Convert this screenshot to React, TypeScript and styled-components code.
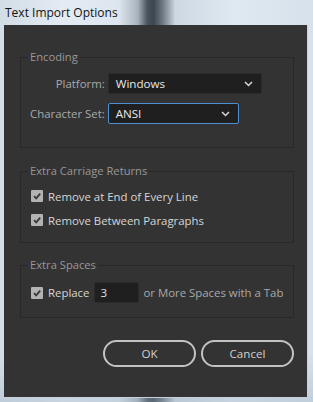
import React from "react";
import styled, { createGlobalStyle } from "styled-components";

const FONT = `"Open Sans", "Liberation Sans", sans-serif`;

const GlobalStyle = createGlobalStyle`
  html, body {
    margin: 0;
    padding: 0;
    width: 313px;
    height: 402px;
    overflow: hidden;
  }
  * { box-sizing: border-box; }
`;

const Frame = styled.div`
  width: 313px;
  height: 402px;
  display: flex;
  flex-direction: column;
  font-family: ${FONT};
  background:
    linear-gradient(180deg, rgba(255,255,255,0.0) 0%, rgba(255,255,255,0) 88%, rgba(150,170,190,0.35) 100%),
    linear-gradient(90deg, #d3dde6 0%, #e3ebf3 20%, #dde6ef 38%, #a9b3bc 44%, #4a5560 47%, #3b4650 49%, #6f7a84 52%, #cdd8e3 56%, #e0e9f1 75%, #d6e1eb 100%);
`;

const TitleBar = styled.div`
  height: 25px;
  flex: none;
  display: flex;
  align-items: center;
  padding-left: 5px;
  padding-bottom: 1px;
  font-size: 12px;
  color: #141414;
`;

const Client = styled.div`
  margin-left: 4px;
  width: 304px;
  height: 373px;
  flex: none;
  background: #333333;
  border-right: 1px solid #c6d1db;
  border-bottom: 1px solid #c6d1db;
  padding: 25px 13px 0 16px;
  display: flex;
  flex-direction: column;
`;

const Group = styled.fieldset<{ $mt: number; $pt: number; $pb: number }>`
  margin: ${(p) => p.$mt}px 0 0 0;
  border: 1px solid #282828;
  padding: ${(p) => p.$pt}px 8px ${(p) => p.$pb}px 9px;
  min-width: 0;
`;

const Legend = styled.legend`
  font-size: 11.2px;
  line-height: 14px;
  color: #989898;
  padding: 0 2px;
  margin-left: -2px;
`;

const FormGrid = styled.div`
  display: grid;
  grid-template-columns: max-content max-content;
  column-gap: 3px;
  row-gap: 9px;
  align-items: center;
`;

const FieldLabel = styled.span`
  justify-self: end;
  font-size: 11.4px;
  color: #aaaaaa;
`;

const Select = styled.div<{ $w: number; $focused?: boolean }>`
  width: ${(p) => p.$w}px;
  height: 21px;
  display: flex;
  align-items: center;
  justify-content: space-between;
  padding: 0 8px 0 7px;
  background: #1f1f1f;
  border: 1px solid ${(p) => (p.$focused ? "#4d8fd1" : "#2b2b2b")};
  border-radius: 2px;
  font-size: 11.6px;
  color: #e8e8e8;
`;

const Rows = styled.div`
  display: flex;
  flex-direction: column;
  gap: 6px;
`;

const CheckRow = styled.div<{ $h?: number }>`
  height: ${(p) => p.$h ?? 18}px;
  display: flex;
  align-items: center;
  gap: 5px;
  font-size: 11.4px;
`;

const Box = styled.span`
  width: 12px;
  height: 12px;
  margin-left: 1px;
  flex: none;
  background: #b3b3b3;
  border-radius: 1px;
  display: flex;
  align-items: center;
  justify-content: center;
`;

const Text = styled.span<{ $bright?: boolean }>`
  color: ${(p) => (p.$bright ? "#d6d6d6" : "#a9a9a9")};
  white-space: nowrap;
`;

const NumberField = styled.div`
  width: 45px;
  height: 21px;
  flex: none;
  display: flex;
  align-items: center;
  padding-left: 5px;
  background: #1f1f1f;
  border: 1px solid #2b2b2b;
  border-radius: 2px;
  color: #e0e0e0;
  font-size: 11.6px;
  margin-right: -1px;
`;

const Footer = styled.div`
  display: flex;
  justify-content: flex-end;
  gap: 5px;
  margin-top: 22px;
`;

const Button = styled.button`
  width: 93px;
  height: 27px;
  border: 2px solid #c3c3c3;
  border-radius: 14px;
  background: transparent;
  color: #d0d0d0;
  font-family: ${FONT};
  font-size: 11.6px;
  padding: 0;
`;

const Chevron = () => (
  <svg width="9" height="6" viewBox="0 0 9 6">
    <path d="M1 1 L4.5 4.5 L8 1" fill="none" stroke="#d8d8d8" strokeWidth="1.5" />
  </svg>
);

const Check = () => (
  <svg width="10" height="10" viewBox="0 0 10 10">
    <path d="M2 5.2 L4.2 7.4 L8.2 2.6" fill="none" stroke="#3a3a3a" strokeWidth="1.8" />
  </svg>
);

export default function App() {
  return (
    <>
      <GlobalStyle />
      <Frame>
        <TitleBar>Text Import Options</TitleBar>
        <Client>
          <Group $mt={0} $pt={9} $pb={23}>
            <Legend>Encoding</Legend>
            <FormGrid>
              <FieldLabel>Platform:</FieldLabel>
              <Select $w={154}>
                <span>Windows</span>
                <Chevron />
              </Select>
              <FieldLabel>Character Set:</FieldLabel>
              <Select $w={131} $focused>
                <span>ANSI</span>
                <Chevron />
              </Select>
            </FormGrid>
          </Group>
          <Group $mt={16} $pt={9} $pb={13}>
            <Legend>Extra Carriage Returns</Legend>
            <Rows>
              <CheckRow>
                <Box><Check /></Box>
                <Text $bright>Remove at End of Every Line</Text>
              </CheckRow>
              <CheckRow>
                <Box><Check /></Box>
                <Text $bright>Remove Between Paragraphs</Text>
              </CheckRow>
            </Rows>
          </Group>
          <Group $mt={15} $pt={10} $pb={14}>
            <Legend>Extra Spaces</Legend>
            <CheckRow $h={21}>
              <Box><Check /></Box>
              <Text $bright>Replace</Text>
              <NumberField>3</NumberField>
              <Text>or More Spaces with a Tab</Text>
            </CheckRow>
          </Group>
          <Footer>
            <Button>OK</Button>
            <Button>Cancel</Button>
          </Footer>
        </Client>
      </Frame>
    </>
  );
}
